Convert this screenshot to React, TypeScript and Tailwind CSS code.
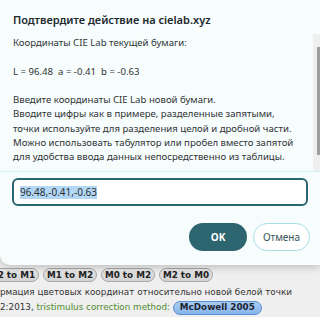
export default function App() {
  const modes = ["M2 to M1", "M1 to M2", "M0 to M2", "M2 to M0"];

  return (
    <div className="relative h-[317px] w-[320px] overflow-hidden bg-[#efefef] font-['DejaVu_Sans',sans-serif]">
      {/* page behind the dialog */}
      <div className="pt-[268px] text-[8.8px] text-[#333]">
        <div className="-ml-[15px] flex gap-[4px]">
          {modes.map((m) => (
            <span
              key={m}
              className="flex h-[14px] w-[54px] items-center justify-center rounded-full border border-[#a8a8a8] bg-gradient-to-b from-[#e8e8e8] to-[#d2d2d2] font-bold leading-none text-[#222]"
            >
              {m}
            </span>
          ))}
        </div>
        <div className="mt-[3px] whitespace-nowrap leading-[15px]">
          рмация цветовых координат относительно новой белой точки
        </div>
        <div className="flex items-center whitespace-nowrap leading-[15px]">
          <span>2:2013,&nbsp;</span>
          <span className="text-[#4e8a2c]">tristimulus correction method:&nbsp;</span>
          <span className="flex h-[14px] items-center rounded-full border border-[#5b8ed2] bg-gradient-to-b from-[#a9ccf4] to-[#86b4ea] px-[6px] font-bold leading-none text-[#1c2430]">
            McDowell 2005
          </span>
        </div>
      </div>

      {/* dialog */}
      <div className="absolute left-0 top-0 flex h-[265px] w-[320px] flex-col rounded-bl-[10px] bg-[#f7fcfd] shadow-[0_2px_8px_rgba(0,0,0,0.22)] font-['Noto_Sans',sans-serif]">
        <div className="h-[34px] px-[13px] pt-[12px] text-[11px] font-semibold leading-[16px] text-[#20292c]">
          Подтвердите действие на cielab.xyz
        </div>

        <div className="flex h-[138px] border-b border-[#d3eff4]">
          <div className="flex-1 pl-[13px] pt-[2px] text-[9.6px] leading-[14.3px] text-[#2f3436]">
            <p>Координаты CIE Lab текущей бумаги:</p>
            <br />
            <p>L = 96.48&nbsp; a = -0.41&nbsp; b = -0.63</p>
            <br />
            <p>
              Введите координаты CIE Lab новой бумаги.
              <br />
              Вводите цифры как в примере, разделенные запятыми,
              <br />
              точки используйте для разделения целой и дробной части.
              <br />
              Можно использовать табулятор или пробел вместо запятой
              <br />
              для удобства ввода данных непосредственно из таблицы.
            </p>
          </div>
          <div className="flex w-[7px] justify-end bg-[#efefef] pt-[13px]">
            <div className="h-[108px] w-[3px] bg-[#9d9d9d]" />
          </div>
        </div>

        <div className="mx-[12px] mt-[6px] flex h-[28px] items-center rounded-[6px] border-2 border-[#2c6571] bg-white px-[6px]">
          <span className="bg-[#b3d8f6] text-[10px] leading-[13px] text-[#2a2f31]">
            96.48,-0.41,-0.63
          </span>
        </div>

        <div className="mt-[17px] flex justify-end gap-[6px] pr-[10px]">
          <button className="h-[28px] w-[58px] rounded-full bg-[#2d6570] text-[10px] font-bold text-white">
            OK
          </button>
          <button className="h-[28px] w-[57px] rounded-full border border-[#a9dfe9] bg-white text-[10px] text-[#3a555b]">
            Отмена
          </button>
        </div>
      </div>
    </div>
  );
}
